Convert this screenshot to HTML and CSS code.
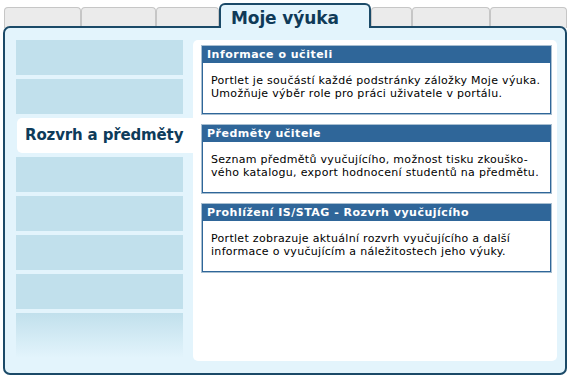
FILE: index.html
```html
<!DOCTYPE html>
<html lang="cs">
<head>
<meta charset="utf-8">
<title>Moje výuka</title>
<link rel="stylesheet" href="styles.css">
</head>
<body>
<div class="page">
  <div class="tabs">
    <div class="tab w1"></div>
    <div class="tab w2"></div>
    <div class="tab w3"></div>
    <div class="tab active">Moje výuka</div>
    <div class="tab w5"></div>
    <div class="tab w6"></div>
    <div class="tab w7"></div>
  </div>
  <div class="panel">
    <div class="sidebar">
      <div class="item"></div>
      <div class="item"></div>
      <div class="item current">Rozvrh a předměty</div>
      <div class="item"></div>
      <div class="item"></div>
      <div class="item"></div>
      <div class="item"></div>
      <div class="item fade"></div>
    </div>
    <div class="content">
      <div class="portlet">
        <div class="portlet-head">Informace o učiteli</div>
        <div class="portlet-body">Portlet je součástí každé podstránky záložky Moje výuka.<br>Umožňuje výběr role pro práci uživatele v portálu.</div>
      </div>
      <div class="portlet">
        <div class="portlet-head">Předměty učitele</div>
        <div class="portlet-body">Seznam předmětů vyučujícího, možnost tisku zkouško-<br>vého katalogu, export hodnocení studentů na předmětu.</div>
      </div>
      <div class="portlet">
        <div class="portlet-head">Prohlížení IS/STAG - Rozvrh vyučujícího</div>
        <div class="portlet-body">Portlet zobrazuje aktuální rozvrh vyučujícího a další<br>informace o vyučujícím a náležitostech jeho výuky.</div>
      </div>
    </div>
  </div>
</div>
</body>
</html>
```

FILE: styles.css
```css
html, body {
  margin: 0;
  padding: 0;
  background: #ffffff;
}
.page {
  width: 571px;
  height: 380px;
  font-family: "DejaVu Sans", Verdana, sans-serif;
  overflow: hidden;
}
.tabs {
  display: flex;
  align-items: flex-end;
  height: 28px;
  padding-left: 4px;
}
.tab {
  box-sizing: border-box;
  height: 21px;
  background: #ebebeb;
  border: 1px solid #c6c6c6;
  border-bottom: none;
  border-radius: 4px 4px 0 0;
}
.w1 { width: 77px; }
.w2 { width: 75px; }
.w3 { width: 63px; }
.w5 { width: 41px; }
.w6 { width: 78px; }
.w7 { width: 77px; }
.tab.active {
  position: relative;
  z-index: 2;
  width: 152px;
  height: 25px;
  background: #e3f4fc;
  border: 2px solid #1b4a68;
  border-bottom: none;
  border-radius: 6px 6px 0 0;
  padding: 2px 0 0 10px;
  line-height: 22px;
  font-size: 17px;
  font-weight: bold;
  color: #0f3a58;
  letter-spacing: -0.1px;
}
.panel {
  position: relative;
  z-index: 1;
  box-sizing: border-box;
  margin: -2px 0 0 3px;
  width: 564px;
  height: 349px;
  background: #e3f4fc;
  border: 2px solid #1b4a68;
  border-radius: 7px;
  padding: 12px 8px 12px 11px;
  display: grid;
  grid-template-columns: 177px 1fr;
}
.sidebar {
  display: flex;
  flex-direction: column;
  gap: 4px;
}
.item {
  width: 167px;
  height: 35px;
  background: #c1e0ec;
  flex: none;
}
.item.current {
  box-sizing: border-box;
  width: 176px;
  height: 35px;
  margin-left: 1px;
  background: #ffffff;
  border-radius: 5px 0 0 5px;
  padding-left: 8px;
  line-height: 34px;
  font-size: 15px;
  font-weight: bold;
  color: #0e3b5a;
  white-space: nowrap;
  letter-spacing: -0.15px;
}
.item.fade {
  height: 45px;
  background: linear-gradient(to bottom, #c1e0ec 0%, #e3f4fc 100%);
}
.content {
  background: #ffffff;
  border-radius: 5px;
  padding: 6px 6px 0 9px;
  display: flex;
  flex-direction: column;
  gap: 11px;
}
.portlet {
  border: 1px solid #2f6699;
  box-shadow: 0 0 0 1px #a8bfd1;
  background: #ffffff;
}
.portlet-head {
  background: #2f6699;
  color: #ffffff;
  font-size: 11px;
  font-weight: bold;
  line-height: 16px;
  height: 16px;
  padding-left: 4px;
  white-space: nowrap;
  letter-spacing: 0.5px;
}
.portlet-body {
  box-sizing: border-box;
  height: 50px;
  padding: 11px 8px 0 8px;
  font-size: 11px;
  line-height: 13px;
  color: #000000;
  white-space: nowrap;
  letter-spacing: 0.3px;
}
```
